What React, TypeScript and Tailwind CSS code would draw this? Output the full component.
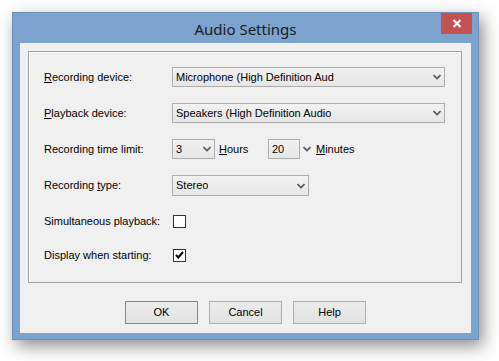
import React from 'react'

const font = { fontFamily: '"Liberation Sans", Arial, sans-serif' }

function Chevron() {
  return (
    <svg width="8" height="6" viewBox="0 0 8 6" className="shrink-0">
      <polyline points="0.5,1 4,4.5 7.5,1" fill="none" stroke="#555" strokeWidth="1.6" />
    </svg>
  )
}

function Combo({ value, width, arrow = true }: { value: string; width: string; arrow?: boolean }) {
  return (
    <div
      className={`${width} h-[20px] flex items-center justify-between pl-[3px] pr-[3px] border border-[#acacac] bg-gradient-to-b from-[#f2f2f2] to-[#e6e6e6] text-[11px] text-black`}
    >
      <span className="whitespace-nowrap overflow-hidden">{value}</span>
      {arrow && <Chevron />}
    </div>
  )
}

function Label({ children }: { children: React.ReactNode }) {
  return <div className="w-[128px] shrink-0 text-[11px] text-black whitespace-nowrap">{children}</div>
}

function CheckBox({ checked }: { checked?: boolean }) {
  return (
    <div className="w-[13px] h-[13px] border border-[#333] bg-white flex items-center justify-center">
      {checked && (
        <svg width="9" height="8" viewBox="0 0 9 8">
          <polyline points="1,4 3.3,6.5 8,1" fill="none" stroke="#000" strokeWidth="2" />
        </svg>
      )}
    </div>
  )
}

function Button({ children, primary }: { children: React.ReactNode; primary?: boolean }) {
  return (
    <div
      className={`w-[73px] h-[23px] flex items-center justify-center border ${primary ? 'border-[#3399ff]' : 'border-[#adadad]'} bg-gradient-to-b from-[#ececec] to-[#e2e2e2] text-[11px] text-black`}
    >
      {children}
    </div>
  )
}

export default function App() {
  return (
    <div className="w-[499px] h-[361px] bg-white pt-[12px] pl-[12px]" style={font}>
      <div className="relative w-[467px] h-[328px] bg-[#7ba3cd] border border-[#6a8fb8] shadow-[4px_6px_16px_rgba(0,0,0,0.45)] flex flex-col">
        {/* title bar */}
        <div className="relative h-[30px] flex items-center justify-center">
          <span
            className="text-[15px] text-[#1a1a1a] mt-[2px]"
            style={{ fontFamily: '"Noto Sans", "Open Sans", sans-serif' }}
          >
            Audio Settings
          </span>
          <div className="absolute right-[6px] top-0 w-[31px] h-[21px] bg-[#c75050] flex items-center justify-center">
            <svg width="10" height="9" viewBox="0 0 10 9">
              <path d="M1.5 1 L8.5 8 M8.5 1 L1.5 8" stroke="#fff" strokeWidth="2" />
            </svg>
          </div>
        </div>

        {/* client area */}
        <div className="mx-[7px] w-[451px] h-[290px] bg-[#f0f0f0] pt-[8px] pl-[8px]">
          <div className="w-[434px] h-[232px] border border-[#a0a0a0] shadow-[inset_1px_1px_0_#fff] pt-[15px] pl-[15px]">
            <div className="flex items-center h-[20px]">
              <Label>
                <u>R</u>ecording device:
              </Label>
              <Combo value="Microphone (High Definition Aud" width="w-[273px]" />
            </div>
            <div className="flex items-center h-[20px] mt-[16px]">
              <Label>
                <u>P</u>layback device:
              </Label>
              <Combo value="Speakers (High Definition Audio" width="w-[273px]" />
            </div>
            <div className="flex items-center h-[20px] mt-[16px]">
              <Label>Recording time limit:</Label>
              <Combo value="3" width="w-[43px]" />
              <span className="text-[11px] ml-[4px] w-[49px]">
                <u>H</u>ours
              </span>
              <Combo value="20" width="w-[32px]" arrow={false} />
              <div className="ml-[3px]">
                <Chevron />
              </div>
              <span className="text-[11px] ml-[5px]">
                <u>M</u>inutes
              </span>
            </div>
            <div className="flex items-center h-[21px] mt-[16px]">
              <Label>
                Recording <u>t</u>ype:
              </Label>
              <Combo value="Stereo" width="w-[137px] h-[21px]" />
            </div>
            <div className="flex items-center h-[20px] mt-[15px]">
              <Label>Simultaneous playback:</Label>
              <div className="ml-[1px]">
                <CheckBox />
              </div>
            </div>
            <div className="flex items-center h-[20px] mt-[14px]">
              <Label>Display when starting:</Label>
              <div className="ml-[1px]">
                <CheckBox checked />
              </div>
            </div>
          </div>
          <div className="flex gap-[11px] mt-[18px] pl-[97px]">
            <Button primary>OK</Button>
            <Button>Cancel</Button>
            <Button>Help</Button>
          </div>
        </div>
      </div>
    </div>
  )
}
